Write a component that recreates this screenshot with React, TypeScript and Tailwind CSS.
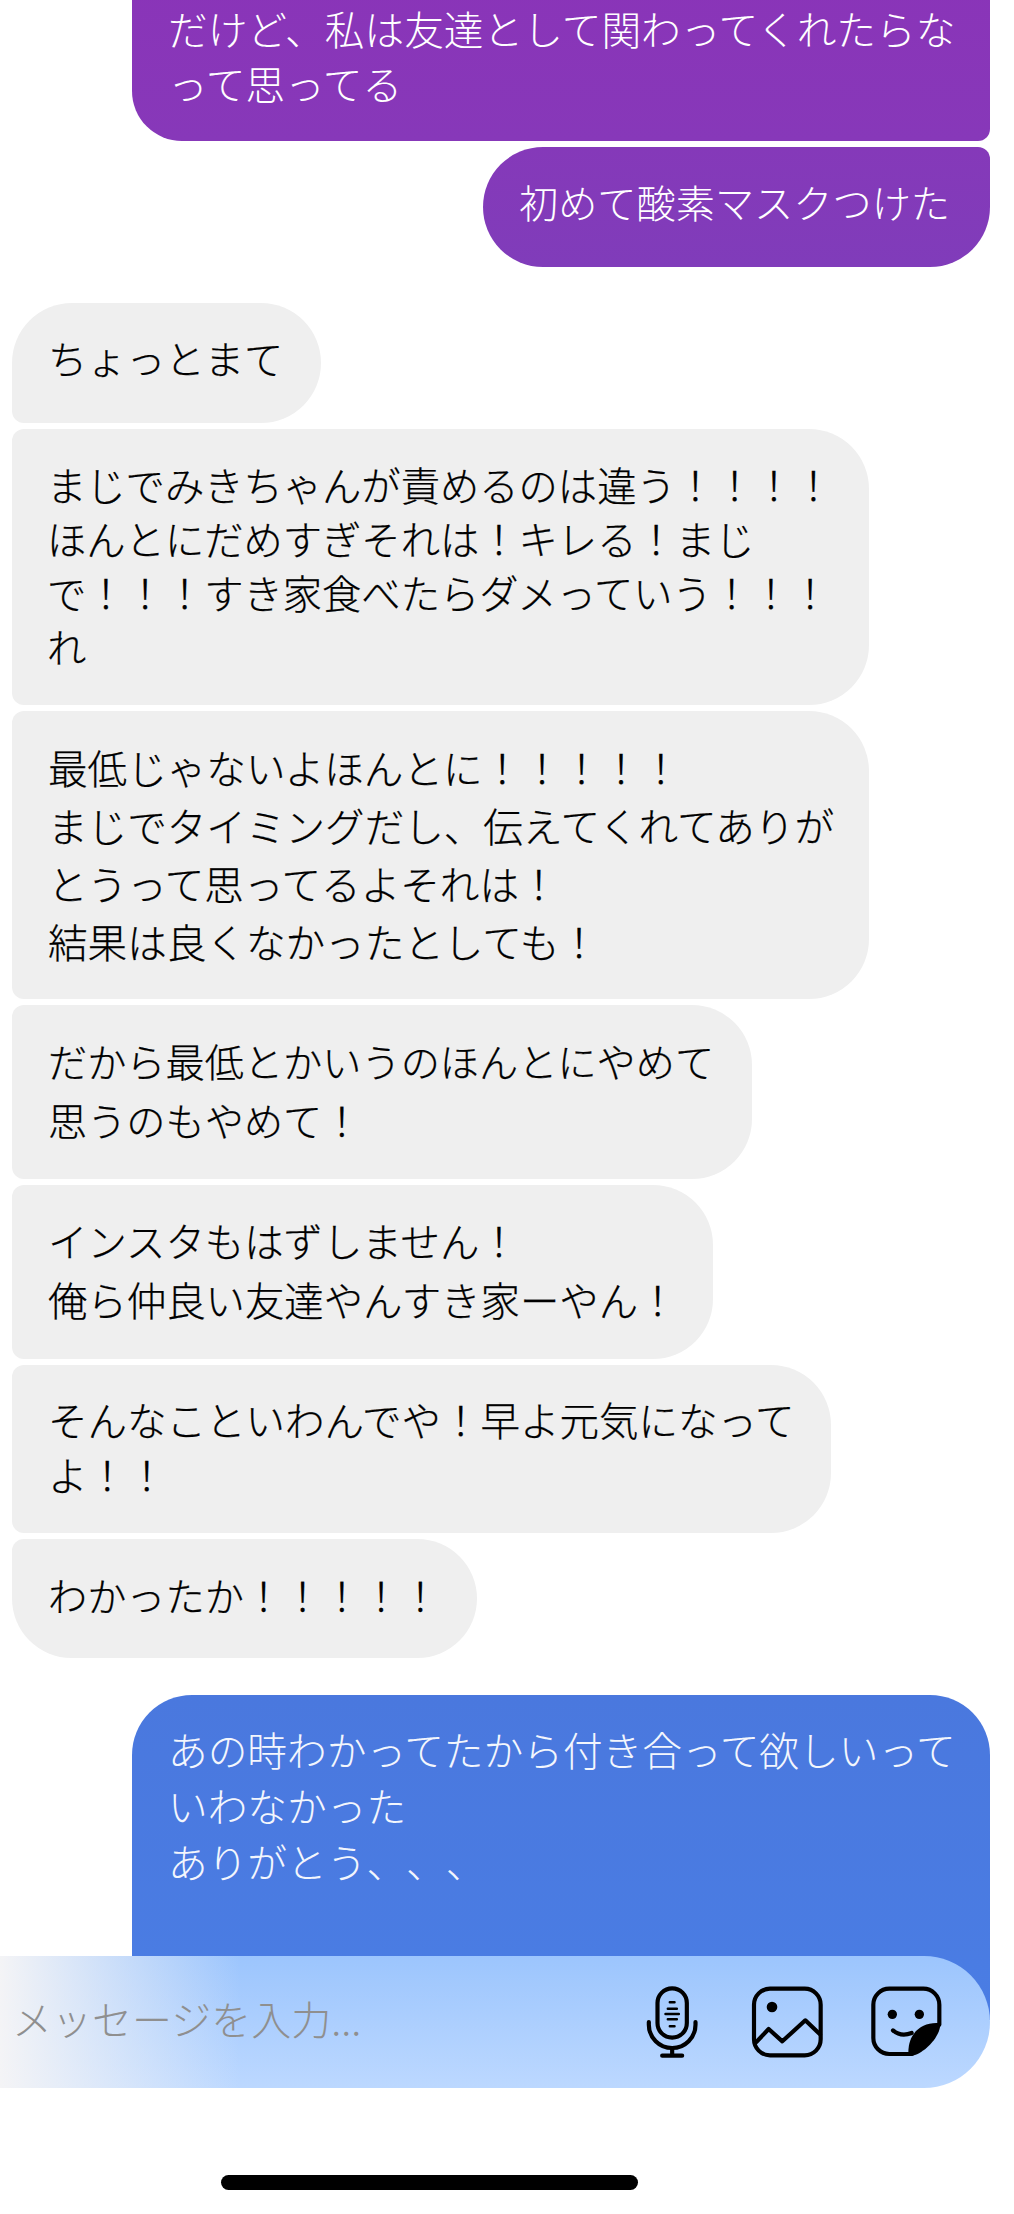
const fontStack = { fontFamily: '"Noto Sans CJK JP", "Noto Sans", sans-serif' };

function Mic() {
  return (
    <svg width="57" height="74" viewBox="42 75 170 222" fill="none" stroke="#000" strokeWidth="12.5" strokeLinecap="round">
      <rect x="82" y="85" width="88" height="148" rx="44" />
      <path d="M119 127h14M113 146h27M106 162h40M113 178h27M119 199h14" strokeWidth="7.5" />
      <path d="M56 186v8a70 70 0 0 0 140 0v-8" />
      <path d="M126 266v21M96 287h60" />
    </svg>
  );
}

function ImageIcon() {
  return (
    <svg width="72" height="72" viewBox="362 80 216 216" fill="none" stroke="#000" strokeWidth="12.5" strokeLinecap="round" strokeLinejoin="round">
      <rect x="371" y="88" width="200" height="200" rx="48" />
      <circle cx="425" cy="143" r="16" fill="#000" stroke="none" />
      <path d="M378 248l37-39 41 37 69-63 44 42" />
    </svg>
  );
}

function Sticker() {
  return (
    <svg width="72" height="72" viewBox="720 80 216 216" fill="none" stroke="#000" strokeWidth="12.5" strokeLinecap="round" strokeLinejoin="round">
      <path d="M846 284H778a48 48 0 0 1-48-48V136a48 48 0 0 1 48-48h102a48 48 0 0 1 48 48v60" />
      <path d="M931 192c-50-6-97 24-96 90l8 8c40-6 90-60 88-98z" fill="#000" stroke="none" />
      <circle cx="787" cy="165" r="14" fill="#000" stroke="none" />
      <circle cx="868" cy="165" r="14" fill="#000" stroke="none" />
      <path d="M789 213c16 14 36 16 56 8" />
    </svg>
  );
}

function Lines({ lines }: { lines: string[] }) {
  return (
    <>
      {lines.map((l) => (
        <div key={l} className="whitespace-nowrap">{l}</div>
      ))}
    </>
  );
}

export default function App() {
  return (
    <div className="relative w-[1014px] h-[2214px] overflow-hidden bg-white font-light [text-spacing-trim:space-all]" style={fontStack}>
      <div className="flex flex-col items-end pr-[24px] pl-[12px]">
        {/* sent, first group */}
        <div className="w-[858px] -mt-[30px] pt-[30px] pb-[31px] pl-[36px] text-[39.7px] leading-[55px] text-white rounded-bl-[50px] rounded-br-[12px] bg-gradient-to-b from-[#8a34b8] to-[#8738b9]">
          <Lines lines={['だけど、私は友達として関わってくれたらな', 'って思ってる']} />
        </div>
        <div className="w-[507px] h-[120px] mt-[6px] pt-[26px] pl-[36px] text-[39.2px] leading-[56px] text-white rounded-l-[60px] rounded-br-[60px] rounded-tr-[12px] bg-gradient-to-b from-[#8539b9] to-[#803cba]">
          <Lines lines={['初めて酸素マスクつけた']} />
        </div>

        {/* received */}
        <div className="self-start mt-[36px] flex flex-col gap-[6px] text-black [-webkit-text-stroke:0.25px_#000]">
          <div className="w-[309px] h-[120px] pt-[26px] pl-[36px] text-[39.2px] leading-[56px] bg-[#efefef] rounded-t-[60px] rounded-br-[60px] rounded-bl-[12px]">
            <Lines lines={['ちょっとまて']} />
          </div>
          <div className="w-[857px] h-[276px] pt-[28px] pl-[35px] text-[39.3px] leading-[54px] bg-[#efefef] rounded-r-[60px] rounded-l-[12px]">
            <Lines lines={['まじでみきちゃんが責めるのは違う！！！！', 'ほんとにだめすぎそれは！キレる！まじ', 'で！！！すき家食べたらダメっていう！！！', 'れ']} />
          </div>
          <div className="w-[857px] h-[288px] pt-[27px] pl-[36px] text-[39.6px] leading-[58px] bg-[#efefef] rounded-r-[60px] rounded-l-[12px]">
            <Lines lines={['最低じゃないよほんとに！！！！！', 'まじでタイミングだし、伝えてくれてありが', 'とうって思ってるよそれは！', '結果は良くなかったとしても！']} />
          </div>
          <div className="w-[740px] h-[174px] pt-[26px] pl-[36px] text-[39.2px] leading-[59px] bg-[#efefef] rounded-r-[60px] rounded-l-[12px]">
            <Lines lines={['だから最低とかいうのほんとにやめて', '思うのもやめて！']} />
          </div>
          <div className="w-[701px] h-[174px] pt-[25px] pl-[36px] text-[39.4px] leading-[59px] bg-[#efefef] rounded-r-[60px] rounded-l-[12px]">
            <Lines lines={['インスタもはずしません！', '俺ら仲良い友達やんすき家ーやん！']} />
          </div>
          <div className="w-[819px] h-[168px] pt-[26px] pl-[36px] text-[39.5px] leading-[55px] bg-[#efefef] rounded-r-[60px] rounded-l-[12px]">
            <Lines lines={['そんなこといわんでや！早よ元気になって', 'よ！！']} />
          </div>
          <div className="w-[465px] h-[119px] pt-[27px] pl-[36px] text-[39.2px] leading-[56px] bg-[#efefef] rounded-b-[60px] rounded-tr-[60px] rounded-tl-[12px]">
            <Lines lines={['わかったか！！！！！']} />
          </div>
        </div>

        {/* sent, last */}
        <div className="w-[858px] h-[325px] mt-[37px] pt-[26px] pl-[36px] text-[39.7px] leading-[56px] text-[#f3f6fd] rounded-t-[60px] bg-gradient-to-b from-[#4a78de] to-[#4a7de4]">
          <Lines lines={['あの時わかってたから付き合って欲しいって', 'いわなかった', 'ありがとう、、、']} />
        </div>
      </div>

      {/* input bar */}
      <div className="absolute left-0 top-[1956px] w-[990px] h-[132px] rounded-r-[66px] bg-gradient-to-b from-[#9cc5fd] to-[#bcd8ff]">
        <div className="absolute inset-y-0 left-0 w-[240px] bg-gradient-to-r from-[#f4f4f6] to-[#f4f4f6]/0" />
        <div className="relative flex h-full items-center pl-[12px] pr-[48px]">
          <span className="flex-1 text-[#8f8f8f] text-[40px] leading-[56px] -mt-[9px]">メッセージを入力...</span>
          <Mic />
          <div className="ml-[50px]"><ImageIcon /></div>
          <div className="ml-[47px]"><Sticker /></div>
        </div>
      </div>

      {/* home indicator */}
      <div className="absolute left-[221px] top-[2175px] w-[417px] h-[15px] rounded-full bg-black" />
    </div>
  );
}
